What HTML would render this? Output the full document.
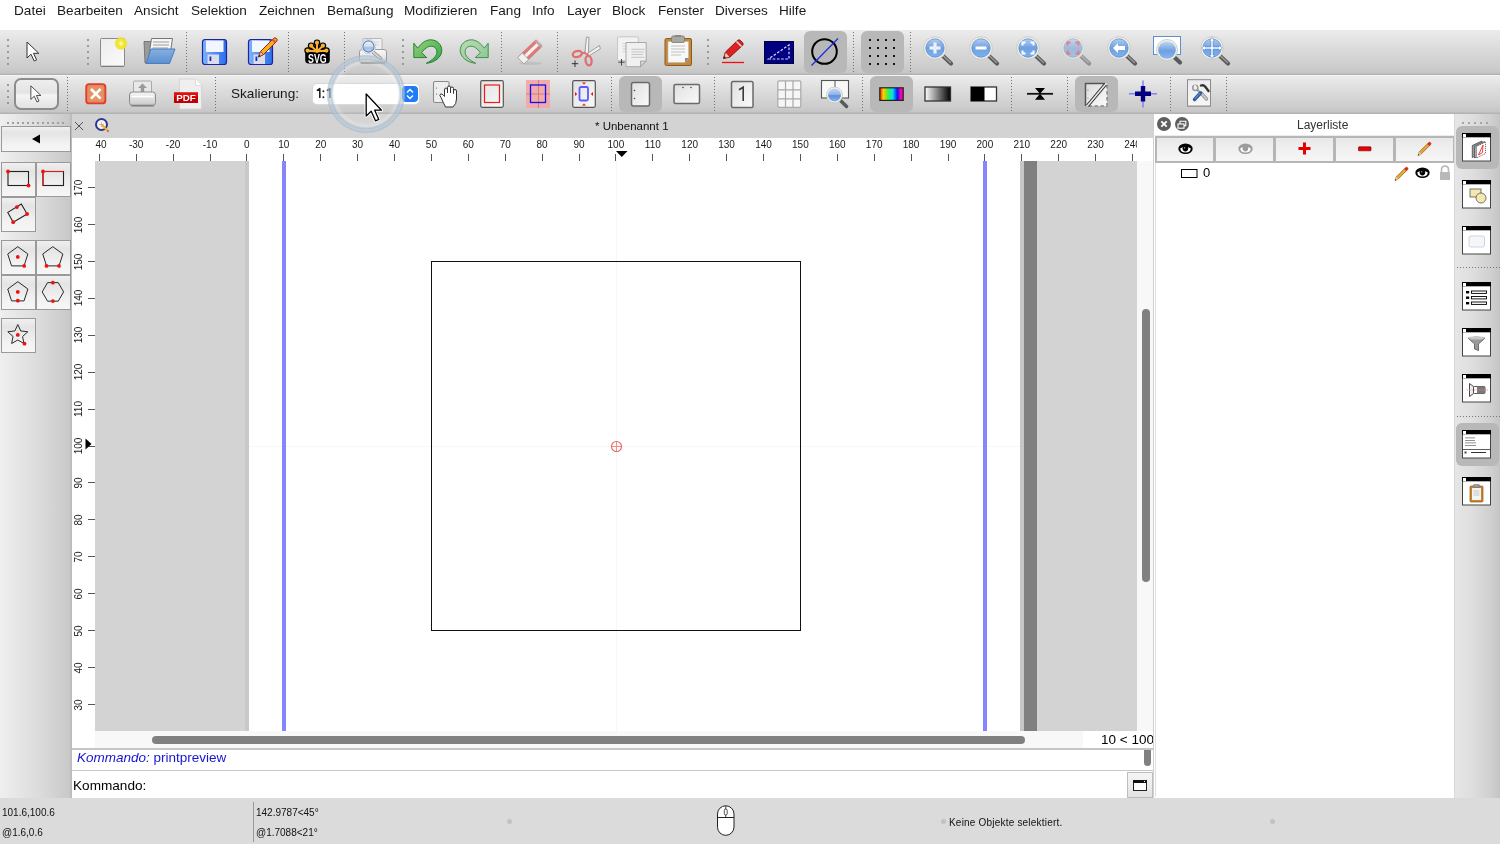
<!DOCTYPE html>
<html><head><meta charset="utf-8">
<style>
*{margin:0;padding:0;box-sizing:border-box}
html,body{width:1500px;height:844px;overflow:hidden;background:#fff;font-family:"Liberation Sans",sans-serif;color:#000;position:relative}
body{will-change:transform}
.a{position:absolute;overflow:visible}
.t{position:absolute;white-space:nowrap;line-height:1}
.menu{font-size:13.6px;color:#1a1a1a;top:3.5px}
.tb{background:linear-gradient(#ededed,#d9d9d9 60%,#cdcdcd);}
.rl{font-size:10px;color:#1a1a1a}
.st{font-size:10px;color:#111}
</style></head><body>
<div class="t menu" style="left:14px">Datei</div>
<div class="t menu" style="left:57px">Bearbeiten</div>
<div class="t menu" style="left:134px">Ansicht</div>
<div class="t menu" style="left:191px">Selektion</div>
<div class="t menu" style="left:259px">Zeichnen</div>
<div class="t menu" style="left:327px">Bemaßung</div>
<div class="t menu" style="left:404px">Modifizieren</div>
<div class="t menu" style="left:490px">Fang</div>
<div class="t menu" style="left:532px">Info</div>
<div class="t menu" style="left:567px">Layer</div>
<div class="t menu" style="left:612px">Block</div>
<div class="t menu" style="left:658px">Fenster</div>
<div class="t menu" style="left:715px">Diverses</div>
<div class="t menu" style="left:779px">Hilfe</div>
<div class="a" style="left:0px;top:30px;width:1500px;height:43px;background:linear-gradient(#ececec,#dcdcdc 40%,#cdcdcd 85%,#c6c6c6)"></div>
<div class="a" style="left:0px;top:73px;width:1500px;height:1px;background:#bdbdbd"></div>
<div class="a" style="left:0px;top:74px;width:1500px;height:1px;background:#b3b3b3"></div>
<div class="a" style="left:0px;top:75px;width:1500px;height:1px;background:#f4f4f4"></div>
<div class="a" style="left:0px;top:76px;width:1500px;height:36px;background:linear-gradient(#ececec,#dcdcdc 40%,#cdcdcd 85%,#c6c6c6)"></div>
<div class="a" style="left:0px;top:112px;width:1500px;height:1px;background:#bcbcbc"></div>
<div class="a" style="left:0px;top:113px;width:1500px;height:1px;background:#b3b3b3"></div>
<div class="a" style="left:7px;top:39px;width:2px;height:2px;background:#9a9a9a"></div>
<div class="a" style="left:7px;top:45px;width:2px;height:2px;background:#9a9a9a"></div>
<div class="a" style="left:7px;top:51px;width:2px;height:2px;background:#9a9a9a"></div>
<div class="a" style="left:7px;top:57px;width:2px;height:2px;background:#9a9a9a"></div>
<div class="a" style="left:7px;top:63px;width:2px;height:2px;background:#9a9a9a"></div>
<svg class="a" style="left:26px;top:41px;" width="15" height="22" viewBox="0 0 15 22"><path d="M1 1V17L5 13.2L8.2 20L10.6 18.9L7.5 12.3H12.8Z" fill="#fff" stroke="#333" stroke-width="1" stroke-linejoin="round"/></svg>
<div class="a" style="left:87px;top:39px;width:2px;height:2px;background:#9a9a9a"></div>
<div class="a" style="left:87px;top:45px;width:2px;height:2px;background:#9a9a9a"></div>
<div class="a" style="left:87px;top:51px;width:2px;height:2px;background:#9a9a9a"></div>
<div class="a" style="left:87px;top:57px;width:2px;height:2px;background:#9a9a9a"></div>
<div class="a" style="left:87px;top:63px;width:2px;height:2px;background:#9a9a9a"></div>
<svg class="a" style="left:99px;top:37px;" width="29" height="31" viewBox="0 0 29 31"><defs><radialGradient id="yg"><stop offset="0" stop-color="#fffff0"/><stop offset="0.35" stop-color="#f4ec30"/><stop offset="0.75" stop-color="#eee030" stop-opacity="0.9"/><stop offset="1" stop-color="#eee030" stop-opacity="0"/></radialGradient>
<linearGradient id="pg" x1="0" y1="0" x2="1" y2="1"><stop offset="0" stop-color="#ececec"/><stop offset="1" stop-color="#fbfbfb"/></linearGradient></defs>
<rect x="1.5" y="1.5" width="24" height="28" rx="1" fill="url(#pg)" stroke="#8a8a8a"/>
<rect x="2" y="28.5" width="23" height="1.5" fill="#777" opacity="0.6"/>
<circle cx="22" cy="6.5" r="7" fill="url(#yg)"/></svg>
<svg class="a" style="left:142px;top:37px;" width="35" height="29" viewBox="0 0 35 29"><defs><linearGradient id="fb" x1="0" y1="0" x2="0" y2="1"><stop offset="0" stop-color="#86b0e0"/><stop offset="1" stop-color="#5b8fd0"/></linearGradient></defs>
<path d="M2 4.5H9L8 26H3Z" fill="#9a9a9a" stroke="#666" stroke-width="0.8"/>
<path d="M9.5 1.5H30.5L28 18H7Z" fill="#f6f6f6" stroke="#777" stroke-width="1"/>
<path d="M11 5H27M11 8H27M10.5 11H26" stroke="#bbb" stroke-width="1.5"/>
<path d="M9 12H33L27.5 26.5H4Z" fill="url(#fb)" stroke="#4a7cc0" stroke-width="1"/></svg>
<div class="a" style="left:186px;top:32px;width:1px;height:40px;background:repeating-linear-gradient(#707070 0 1px,transparent 1px 3px)"></div>
<svg class="a" style="left:202px;top:39px;" width="26" height="27" viewBox="0 0 26 27"><defs><linearGradient id="flb" x1="0" y1="0" x2="1" y2="0"><stop offset="0" stop-color="#7fb2ff"/><stop offset="0.5" stop-color="#4d8ff5"/><stop offset="1" stop-color="#2f6fe8"/></linearGradient></defs>
<rect x="0.5" y="0.5" width="24" height="25" rx="2.5" fill="url(#flb)" stroke="#22229a" stroke-width="1.2"/>
<rect x="4" y="1.5" width="17.5" height="11.5" fill="#f4f6ff"/>
<rect x="5.5" y="15.5" width="11.5" height="9.5" fill="#dcdcea"/>
<rect x="7.5" y="17.5" width="1.8" height="4.5" fill="#0b32d0"/></svg>
<svg class="a" style="left:248px;top:39px;" width="26" height="27" viewBox="0 0 26 27"><defs><linearGradient id="flb2" x1="0" y1="0" x2="1" y2="0"><stop offset="0" stop-color="#7fb2ff"/><stop offset="0.5" stop-color="#4d8ff5"/><stop offset="1" stop-color="#2f6fe8"/></linearGradient></defs>
<rect x="0.5" y="0.5" width="24" height="25" rx="2.5" fill="url(#flb2)" stroke="#22229a" stroke-width="1.2"/>
<rect x="4" y="1.5" width="17.5" height="11.5" fill="#f4f6ff"/>
<rect x="5.5" y="15.5" width="11.5" height="9.5" fill="#dcdcea"/>
<rect x="7.5" y="17.5" width="1.8" height="4.5" fill="#0b32d0"/></svg>
<svg class="a" style="left:256px;top:36px;" width="22" height="24" viewBox="0 0 22 24"><path d="M2.5 21L4.5 15.5L17.5 2.5Q19 1 20.5 2.5Q22 4 20.5 5.5L7.5 18.5Z" fill="#f8b020" stroke="#a02010" stroke-width="1"/><path d="M5 16L8 19" stroke="#a02010" stroke-width="0.8"/><path d="M2.5 21L4.5 15.5L7.5 18.5Z" fill="#e8c8a0" stroke="#802010" stroke-width="0.6"/><path d="M2.5 21L3.3 18.8L4.7 20.2Z" fill="#222"/><path d="M16.5 3.5L19.5 6.5" stroke="#e05030" stroke-width="2"/></svg>
<div class="a" style="left:288px;top:32px;width:1px;height:40px;background:repeating-linear-gradient(#707070 0 1px,transparent 1px 3px)"></div>
<svg class="a" style="left:304px;top:39px;" width="27" height="26" viewBox="0 0 27 26"><rect x="1.2" y="9" width="24.6" height="15.6" rx="3.6" fill="#000"/><path d="M13 12.5L13 3.7" stroke="#000" stroke-width="4.6" stroke-linecap="round"/><circle cx="13" cy="3.7" r="3.3" fill="#000"/><path d="M13 12.5L7.1 6.7" stroke="#000" stroke-width="4.6" stroke-linecap="round"/><circle cx="7.1" cy="6.7" r="3.3" fill="#000"/><path d="M13 12.5L18.9 6.7" stroke="#000" stroke-width="4.6" stroke-linecap="round"/><circle cx="18.9" cy="6.7" r="3.3" fill="#000"/><path d="M13 12.5L3.6 11.6" stroke="#000" stroke-width="4.6" stroke-linecap="round"/><circle cx="3.6" cy="11.6" r="3.3" fill="#000"/><path d="M13 12.5L22.4 11.6" stroke="#000" stroke-width="4.6" stroke-linecap="round"/><circle cx="22.4" cy="11.6" r="3.3" fill="#000"/><path d="M13 12.5L13 3.7" stroke="#f8b030" stroke-width="2" stroke-linecap="round"/><circle cx="13" cy="3.7" r="2.1" fill="#f8b030"/><path d="M13 12.5L7.1 6.7" stroke="#f8b030" stroke-width="2" stroke-linecap="round"/><circle cx="7.1" cy="6.7" r="2.1" fill="#f8b030"/><path d="M13 12.5L18.9 6.7" stroke="#f8b030" stroke-width="2" stroke-linecap="round"/><circle cx="18.9" cy="6.7" r="2.1" fill="#f8b030"/><path d="M13 12.5L3.6 11.6" stroke="#f8b030" stroke-width="2" stroke-linecap="round"/><circle cx="3.6" cy="11.6" r="2.1" fill="#f8b030"/><path d="M13 12.5L22.4 11.6" stroke="#f8b030" stroke-width="2" stroke-linecap="round"/><circle cx="22.4" cy="11.6" r="2.1" fill="#f8b030"/>
<path d="M2.5 12.2H23.5" stroke="#f8b030" stroke-width="1.6"/><path d="M9 12L13 9.5L17 12Z" fill="#f8b030"/>
<text x="13.4" y="23.6" font-family="Liberation Sans" font-weight="bold" font-size="12.5" fill="#fff" text-anchor="middle" textLength="18.6" lengthAdjust="spacingAndGlyphs">SVG</text></svg>
<div class="a" style="left:344px;top:32px;width:1px;height:40px;background:repeating-linear-gradient(#707070 0 1px,transparent 1px 3px)"></div>
<svg class="a" style="left:358px;top:37px;" width="31" height="28" viewBox="0 0 31 28"><defs><linearGradient id="prb" x1="0" y1="0" x2="0" y2="1"><stop offset="0" stop-color="#fafafa"/><stop offset="0.6" stop-color="#e4e4e4"/><stop offset="1" stop-color="#c4c4c4"/></linearGradient>
<linearGradient id="lns" x1="0" y1="0" x2="0" y2="1"><stop offset="0" stop-color="#f4f7fc"/><stop offset="0.55" stop-color="#c8d6ea"/><stop offset="0.6" stop-color="#a8bcd8"/><stop offset="1" stop-color="#c4d4ea"/></linearGradient></defs>
<rect x="5" y="1.5" width="19" height="14" rx="1" fill="#f0f0f0" stroke="#b8b8b8"/>
<path d="M14 5H21M14 8H21" stroke="#d4d4d4"/>
<rect x="1.5" y="12.5" width="27" height="13.5" rx="2.5" fill="url(#prb)" stroke="#9a9a9a"/>
<rect x="2.5" y="24.5" width="25" height="2.5" rx="1" fill="#666" opacity="0.45"/>
<path d="M15.5 15.5L22.5 21.5" stroke="#8a8a8a" stroke-width="3.6" stroke-linecap="round"/><path d="M15.5 15.5L22.5 21.5" stroke="#d8d8d8" stroke-width="1.8" stroke-linecap="round"/>
<circle cx="10.5" cy="9.5" r="7.2" fill="#f6f6f6" stroke="#c8c8c8" stroke-width="0.8"/>
<circle cx="10.5" cy="9.5" r="5.6" fill="url(#lns)" stroke="#4f86d0" stroke-width="1.1"/></svg>
<div class="a" style="left:402px;top:39px;width:2px;height:2px;background:#9a9a9a"></div>
<div class="a" style="left:402px;top:45px;width:2px;height:2px;background:#9a9a9a"></div>
<div class="a" style="left:402px;top:51px;width:2px;height:2px;background:#9a9a9a"></div>
<div class="a" style="left:402px;top:57px;width:2px;height:2px;background:#9a9a9a"></div>
<div class="a" style="left:402px;top:63px;width:2px;height:2px;background:#9a9a9a"></div>
<svg class="a" style="left:413px;top:39px;" width="31" height="27" viewBox="0 0 31 27"><defs><linearGradient id="ug" x1="0" y1="0" x2="1" y2="1"><stop offset="0" stop-color="#96d27a"/><stop offset="1" stop-color="#34a448"/></linearGradient></defs><path d="M0.8 4.2L4.6 9.1C8 5 12 0.8 17.5 0.8C24 0.8 28.8 5.5 28.8 11.4C28.8 18 22 23.5 13.3 24.3C19.5 21 23.9 17.5 23.9 12.9C23.9 9.5 21.5 7.2 18.2 7.2C14.5 7.2 11.5 10 8.7 13.5L13.7 18.6H0.8Z" fill="url(#ug)" stroke="#1a7a2a" stroke-width="0.9" stroke-linejoin="round"/></svg>
<svg class="a" style="left:459px;top:39px;" width="31" height="27" viewBox="0 0 31 27"><defs><linearGradient id="rg" x1="1" y1="0" x2="0" y2="1"><stop offset="0" stop-color="#b4dca8"/><stop offset="1" stop-color="#7cc488"/></linearGradient></defs><g transform="translate(30,0) scale(-1,1)" opacity="0.85"><path d="M0.8 4.2L4.6 9.1C8 5 12 0.8 17.5 0.8C24 0.8 28.8 5.5 28.8 11.4C28.8 18 22 23.5 13.3 24.3C19.5 21 23.9 17.5 23.9 12.9C23.9 9.5 21.5 7.2 18.2 7.2C14.5 7.2 11.5 10 8.7 13.5L13.7 18.6H0.8Z" fill="url(#rg)" stroke="#1a7a2a" stroke-width="0.9" stroke-linejoin="round"/></g></svg>
<div class="a" style="left:501px;top:32px;width:1px;height:40px;background:repeating-linear-gradient(#707070 0 1px,transparent 1px 3px)"></div>
<svg class="a" style="left:516px;top:38px;" width="29" height="28" viewBox="0 0 29 28"><ellipse cx="14.5" cy="25.3" rx="11.5" ry="1.6" fill="#aaa" opacity="0.45"/>
<g transform="translate(14,13.8) rotate(-44)"><rect x="-12.8" y="-4.5" width="25.6" height="9" rx="1.2" fill="#e07a7a" stroke="#c46a6a" stroke-width="0.7"/>
<rect x="-12.8" y="-1.6" width="25.6" height="3.2" fill="#f6f2f2"/><rect x="10.6" y="-4.5" width="2.2" height="9" fill="#b8a8a8"/>
<rect x="-12.8" y="-4.5" width="6.5" height="9" fill="#f0f0f0" stroke="#9a9a9a" stroke-width="0.7"/></g></svg>
<div class="a" style="left:557px;top:32px;width:1px;height:40px;background:repeating-linear-gradient(#707070 0 1px,transparent 1px 3px)"></div>
<svg class="a" style="left:571px;top:36px;" width="31" height="31" viewBox="0 0 31 31"><path d="M13.8 18L15.5 1.2H18L17.2 18.5Z" fill="#f4f4f4" stroke="#8a8a8a" stroke-width="0.8"/>
<path d="M16.5 17.5L28.5 9.5L29.3 12.8L17.5 20Z" fill="#f4f4f4" stroke="#8a8a8a" stroke-width="0.8"/>
<path d="M10 17.5L15 16.5M16.5 20L16.2 17" stroke="#e07070" stroke-width="2.2"/>
<g fill="none" stroke="#e07070" stroke-width="2.3"><ellipse cx="6.3" cy="18" rx="4.6" ry="3" transform="rotate(-15 6.3 18)"/><ellipse cx="17.6" cy="24.6" rx="3" ry="4.8" transform="rotate(-8 17.6 24.6)"/></g>
<path d="M4 24.5V31M0.8 27.7H7.2" stroke="#333" stroke-width="1"/></svg>
<svg class="a" style="left:616px;top:36px;" width="32" height="32" viewBox="0 0 32 32"><rect x="1.5" y="0.8" width="20.8" height="23.7" rx="1" fill="#f2f2f2" stroke="#c4c4c4" stroke-width="0.9"/>
<path d="M6.5 7.5H12M6.5 10.3H12M6.5 13H12M6.5 15.8H12" stroke="#d0d0d0" stroke-width="1"/>
<path d="M10 6.5H30.2V25L24.5 30.7H10Z" fill="#f0f0f0" stroke="#a8a8a8" stroke-width="1"/>
<path d="M15.5 13.3H28.5M15.5 16H28M15.5 18.5H27M15.5 21.3H28.5" stroke="#c0c0c0" stroke-width="0.9"/>
<path d="M24.5 30.7V25H30.2Z" fill="#d4d4d4" stroke="#999" stroke-width="0.8"/>
<path d="M5.5 23V29.5M2.3 26.2H8.7" stroke="#333" stroke-width="0.9"/></svg>
<svg class="a" style="left:664px;top:35px;" width="29" height="32" viewBox="0 0 29 32"><rect x="1" y="3.5" width="26.5" height="27" rx="1.5" fill="#c48a3a" stroke="#8a5a20"/>
<path d="M4 6.5H24.5V23L21 27.5H4Z" fill="#f8f8f8" stroke="#bbb" stroke-width="0.6"/>
<path d="M7 11H21M7 14H21M7 17H21M7 20H17" stroke="#c0c0c0" stroke-width="1"/>
<path d="M21 27.5L24.5 23H21Z" fill="#888"/>
<rect x="7.5" y="1" width="13" height="6.5" rx="1.5" fill="#a8a8a0" stroke="#777" stroke-width="0.8"/>
<rect x="11" y="0" width="6" height="2" fill="#888"/></svg>
<div class="a" style="left:707px;top:39px;width:2px;height:2px;background:#9a9a9a"></div>
<div class="a" style="left:707px;top:45px;width:2px;height:2px;background:#9a9a9a"></div>
<div class="a" style="left:707px;top:51px;width:2px;height:2px;background:#9a9a9a"></div>
<div class="a" style="left:707px;top:57px;width:2px;height:2px;background:#9a9a9a"></div>
<div class="a" style="left:707px;top:63px;width:2px;height:2px;background:#9a9a9a"></div>
<svg class="a" style="left:721px;top:39px;" width="25" height="26" viewBox="0 0 25 26"><path d="M2.5 19.5L4.5 13L16.5 1.5Q18 0 19.5 1.5L21.5 3.5Q23 5 21.5 6.5L9 18Z" fill="#e02020" stroke="#801010" stroke-width="0.9"/>
<path d="M15.5 2.5L20.5 7.5" stroke="#ddd" stroke-width="1.6"/>
<path d="M2.5 19.5L4.5 13L9 18Z" fill="#f0c8a0" stroke="#801010" stroke-width="0.6"/>
<path d="M2.5 19.5L3.3 17L5 18.6Z" fill="#222"/>
<path d="M1 23.5H23" stroke="#f01010" stroke-width="1.3"/></svg>
<svg class="a" style="left:764px;top:41px;" width="31" height="23" viewBox="0 0 31 23"><rect x="0.5" y="0.5" width="29" height="22" fill="#000080" stroke="#000040"/>
<path d="M4.5 18H25V4Z" fill="none" stroke="#dcdcff" stroke-width="1.2" stroke-dasharray="2.6 1.6"/></svg>
<div class="a" style="left:804px;top:31px;width:43px;height:42px;background:#b8b8b8;border-radius:6px"></div>
<svg class="a" style="left:810px;top:37px;" width="30" height="30" viewBox="0 0 30 30"><circle cx="14.5" cy="14.5" r="12.3" fill="none" stroke="#000" stroke-width="2"/>
<path d="M1.5 28.5L28 1.5" stroke="#1a2ae0" stroke-width="1.2"/></svg>
<div class="a" style="left:853px;top:32px;width:1px;height:40px;background:repeating-linear-gradient(#707070 0 1px,transparent 1px 3px)"></div>
<div class="a" style="left:861px;top:31px;width:43px;height:42px;background:#b8b8b8;border-radius:6px"></div>
<svg class="a" style="left:869px;top:39px;" width="26" height="26" viewBox="0 0 26 26"><rect x="0" y="0" width="2" height="2" fill="#111"/><rect x="0" y="8" width="2" height="2" fill="#111"/><rect x="0" y="16" width="2" height="2" fill="#111"/><rect x="0" y="24" width="2" height="2" fill="#111"/><rect x="8" y="0" width="2" height="2" fill="#111"/><rect x="8" y="8" width="2" height="2" fill="#111"/><rect x="8" y="16" width="2" height="2" fill="#111"/><rect x="8" y="24" width="2" height="2" fill="#111"/><rect x="16" y="0" width="2" height="2" fill="#111"/><rect x="16" y="8" width="2" height="2" fill="#111"/><rect x="16" y="16" width="2" height="2" fill="#111"/><rect x="16" y="24" width="2" height="2" fill="#111"/><rect x="24" y="0" width="2" height="2" fill="#111"/><rect x="24" y="8" width="2" height="2" fill="#111"/><rect x="24" y="16" width="2" height="2" fill="#111"/><rect x="24" y="24" width="2" height="2" fill="#111"/></svg>
<div class="a" style="left:910px;top:32px;width:1px;height:40px;background:repeating-linear-gradient(#707070 0 1px,transparent 1px 3px)"></div>
<svg class="a" style="left:923px;top:36px;" width="32" height="32" viewBox="0 0 32 32"><defs><linearGradient id="zg923" x1="0" y1="0" x2="0" y2="1"><stop offset="0" stop-color="#b4cdf0"/><stop offset="0.5" stop-color="#6e9fe0"/><stop offset="1" stop-color="#7fb0ee"/></linearGradient></defs>
<g><path d="M19 19L28 27.5" stroke="#5a5a5a" stroke-width="4.2" stroke-linecap="round"/><path d="M19.5 19L27.5 26.5" stroke="#9a9a9a" stroke-width="1.5" stroke-linecap="round"/>
<circle cx="12" cy="12" r="11.3" fill="#f2f2ee" stroke="#c4c4b8" stroke-width="0.8"/>
<circle cx="12" cy="12" r="9.2" fill="url(#zg923)" stroke="#5d8fd0" stroke-width="0.8"/><path d="M12 6.5V17.5M6.5 12H17.5" stroke="#fff" stroke-width="3"/><path d="M12 6.5V17.5M6.5 12H17.5" stroke="#3a6ab8" stroke-width="0.4" opacity="0.4"/></g></svg>
<svg class="a" style="left:969px;top:36px;" width="32" height="32" viewBox="0 0 32 32"><defs><linearGradient id="zg969" x1="0" y1="0" x2="0" y2="1"><stop offset="0" stop-color="#b4cdf0"/><stop offset="0.5" stop-color="#6e9fe0"/><stop offset="1" stop-color="#7fb0ee"/></linearGradient></defs>
<g><path d="M19 19L28 27.5" stroke="#5a5a5a" stroke-width="4.2" stroke-linecap="round"/><path d="M19.5 19L27.5 26.5" stroke="#9a9a9a" stroke-width="1.5" stroke-linecap="round"/>
<circle cx="12" cy="12" r="11.3" fill="#f2f2ee" stroke="#c4c4b8" stroke-width="0.8"/>
<circle cx="12" cy="12" r="9.2" fill="url(#zg969)" stroke="#5d8fd0" stroke-width="0.8"/><path d="M6.5 12H17.5" stroke="#fff" stroke-width="3"/></g></svg>
<svg class="a" style="left:1016px;top:36px;" width="32" height="32" viewBox="0 0 32 32"><defs><linearGradient id="zg1016" x1="0" y1="0" x2="0" y2="1"><stop offset="0" stop-color="#b4cdf0"/><stop offset="0.5" stop-color="#6e9fe0"/><stop offset="1" stop-color="#7fb0ee"/></linearGradient></defs>
<g><path d="M19 19L28 27.5" stroke="#5a5a5a" stroke-width="4.2" stroke-linecap="round"/><path d="M19.5 19L27.5 26.5" stroke="#9a9a9a" stroke-width="1.5" stroke-linecap="round"/>
<circle cx="12" cy="12" r="11.3" fill="#f2f2ee" stroke="#c4c4b8" stroke-width="0.8"/>
<circle cx="12" cy="12" r="9.2" fill="url(#zg1016)" stroke="#5d8fd0" stroke-width="0.8"/><path d="M6.5 9.5V6.5H9.5M14.5 6.5H17.5V9.5M17.5 14.5V17.5H14.5M9.5 17.5H6.5V14.5" fill="none" stroke="#fff" stroke-width="2"/></g></svg>
<svg class="a" style="left:1061px;top:36px;" width="32" height="32" viewBox="0 0 32 32"><defs><linearGradient id="zg1061" x1="0" y1="0" x2="0" y2="1"><stop offset="0" stop-color="#b4cdf0"/><stop offset="0.5" stop-color="#6e9fe0"/><stop offset="1" stop-color="#7fb0ee"/></linearGradient></defs>
<g opacity="0.55"><path d="M19 19L28 27.5" stroke="#5a5a5a" stroke-width="4.2" stroke-linecap="round"/><path d="M19.5 19L27.5 26.5" stroke="#9a9a9a" stroke-width="1.5" stroke-linecap="round"/>
<circle cx="12" cy="12" r="11.3" fill="#f2f2ee" stroke="#c4c4b8" stroke-width="0.8"/>
<circle cx="12" cy="12" r="9.2" fill="url(#zg1061)" stroke="#5d8fd0" stroke-width="0.8"/><path d="M6.5 9.5V6.5H9.5M14.5 6.5H17.5V9.5M17.5 14.5V17.5H14.5M9.5 17.5H6.5V14.5" fill="none" stroke="#f03030" stroke-width="2"/></g></svg>
<svg class="a" style="left:1107px;top:36px;" width="32" height="32" viewBox="0 0 32 32"><defs><linearGradient id="zg1107" x1="0" y1="0" x2="0" y2="1"><stop offset="0" stop-color="#b4cdf0"/><stop offset="0.5" stop-color="#6e9fe0"/><stop offset="1" stop-color="#7fb0ee"/></linearGradient></defs>
<g><path d="M19 19L28 27.5" stroke="#5a5a5a" stroke-width="4.2" stroke-linecap="round"/><path d="M19.5 19L27.5 26.5" stroke="#9a9a9a" stroke-width="1.5" stroke-linecap="round"/>
<circle cx="12" cy="12" r="11.3" fill="#f2f2ee" stroke="#c4c4b8" stroke-width="0.8"/>
<circle cx="12" cy="12" r="9.2" fill="url(#zg1107)" stroke="#5d8fd0" stroke-width="0.8"/><path d="M6 12L11 7V10H18V14H11V17Z" fill="#fff"/></g></svg>
<svg class="a" style="left:1152px;top:35px;" width="32" height="32" viewBox="0 0 32 32"><defs><linearGradient id="zwg" x1="0" y1="0" x2="0" y2="1"><stop offset="0" stop-color="#c4d8f4"/><stop offset="0.55" stop-color="#6e9fe0"/><stop offset="1" stop-color="#8ab8f0"/></linearGradient></defs>
<rect x="1.5" y="1.5" width="27" height="18" fill="#fff" stroke="#5d8fd0" stroke-width="1"/>
<path d="M21 21L28 27.5" stroke="#5a5a5a" stroke-width="4.2" stroke-linecap="round"/>
<circle cx="15" cy="15" r="10.5" fill="#f2f2ee" stroke="#c4c4b8" stroke-width="0.8"/>
<circle cx="15" cy="15" r="8.8" fill="url(#zwg)"/></svg>
<svg class="a" style="left:1200px;top:36px;" width="32" height="32" viewBox="0 0 32 32"><defs><linearGradient id="zg1200" x1="0" y1="0" x2="0" y2="1"><stop offset="0" stop-color="#b4cdf0"/><stop offset="0.5" stop-color="#6e9fe0"/><stop offset="1" stop-color="#7fb0ee"/></linearGradient></defs>
<g><path d="M19 19L28 27.5" stroke="#5a5a5a" stroke-width="4.2" stroke-linecap="round"/><path d="M19.5 19L27.5 26.5" stroke="#9a9a9a" stroke-width="1.5" stroke-linecap="round"/>
<circle cx="12" cy="12" r="11.3" fill="#f2f2ee" stroke="#c4c4b8" stroke-width="0.8"/>
<circle cx="12" cy="12" r="9.2" fill="url(#zg1200)" stroke="#5d8fd0" stroke-width="0.8"/><path d="M12 1.5L14.5 5H13V11H19V9.5L22.5 12L19 14.5V13H13V19H14.5L12 22.5L9.5 19H11V13H5V14.5L1.5 12L5 9.5V11H11V5H9.5Z" fill="#fff" stroke="#4a7cc8" stroke-width="0.5"/></g></svg>
<div class="a" style="left:7px;top:84px;width:2px;height:2px;background:#9a9a9a"></div>
<div class="a" style="left:7px;top:90px;width:2px;height:2px;background:#9a9a9a"></div>
<div class="a" style="left:7px;top:96px;width:2px;height:2px;background:#9a9a9a"></div>
<div class="a" style="left:7px;top:102px;width:2px;height:2px;background:#9a9a9a"></div>
<div class="a" style="left:14px;top:78px;width:45px;height:32px;border:2px solid #8c8c8c;border-radius:7px;background:linear-gradient(#eeeeee,#e4e4e4 45%,#f4f4f4 55%,#e2e2e2)"></div>
<svg class="a" style="left:30px;top:85px;" width="15" height="22" viewBox="0 0 15 22"><g transform="scale(0.85)"><path d="M1 1V17L5 13.2L8.2 20L10.6 18.9L7.5 12.3H12.8Z" fill="#fff" stroke="#333" stroke-width="1" stroke-linejoin="round"/></g></svg>
<div class="a" style="left:67px;top:77px;width:1px;height:34px;background:repeating-linear-gradient(#707070 0 1px,transparent 1px 3px)"></div>
<svg class="a" style="left:85px;top:83px;" width="22" height="22" viewBox="0 0 22 22"><rect x="1.2" y="1.2" width="19.2" height="19.2" rx="3" fill="#e38a5c" stroke="#e23c2c" stroke-width="1.8"/><rect x="3.5" y="3.5" width="14.6" height="14.6" fill="#e49a70" opacity="0.5"/><path d="M6 6L15.6 15.6M15.6 6L6 15.6" stroke="#fff" stroke-width="2.6"/></svg>
<svg class="a" style="left:128px;top:80px;" width="29" height="28" viewBox="0 0 29 28"><defs><linearGradient id="pb2" x1="0" y1="0" x2="0" y2="1"><stop offset="0" stop-color="#f6f6f6"/><stop offset="1" stop-color="#c8c8c8"/></linearGradient></defs>
<rect x="5.5" y="1" width="18" height="13" rx="1" fill="#e8e8e8" stroke="#aaa"/>
<path d="M14.5 3.5L19 8H16.2V12.5H12.8V8H10Z" fill="#999"/>
<rect x="1.5" y="12" width="26" height="13.5" rx="3" fill="url(#pb2)" stroke="#8a8a8a"/>
<path d="M3.5 16.5H25.5" stroke="#fff" stroke-width="1.5"/>
<rect x="3" y="24.5" width="23" height="2.5" rx="1" fill="#777" opacity="0.5"/></svg>
<svg class="a" style="left:173px;top:78px;" width="30" height="32" viewBox="0 0 30 32"><path d="M6.5 1H22.5L28.5 7.5V31H6.5Z" fill="#efefef" stroke="#d0d0d0" stroke-width="0.8"/>
<path d="M22.5 1V7.5H28.5" fill="#fff" stroke="#ccc" stroke-width="0.6"/>
<rect x="1" y="14.5" width="24" height="10.5" fill="#c20000"/>
<rect x="1" y="14.5" width="24" height="4" fill="#e01010"/>
<text x="13" y="23.2" font-family="Liberation Sans" font-weight="bold" font-size="9.5" fill="#fff" text-anchor="middle" textLength="19.5" lengthAdjust="spacingAndGlyphs">PDF</text></svg>
<div class="a" style="left:215px;top:77px;width:1px;height:34px;background:repeating-linear-gradient(#707070 0 1px,transparent 1px 3px)"></div>
<div class="t" style="left:231px;top:87px;font-size:13.6px;color:#1a1a1a">Skalierung:</div>
<div class="a" style="left:312px;top:83px;width:108px;height:21.5px;background:#fff;border:1px solid #d4d8dc;border-radius:5px"></div>
<svg class="a" style="left:314px;top:86px;" width="20" height="14" viewBox="0 0 20 14"><path d="M2.8 4.6L5.8 2.6V12.1M12.9 4.6L15.9 2.6V12.1" fill="none" stroke="#1a1a1a" stroke-width="1.5" stroke-linejoin="round"/><circle cx="9.4" cy="5.3" r="0.95" fill="#1a1a1a"/><circle cx="9.4" cy="11.2" r="0.95" fill="#1a1a1a"/></svg>
<div class="a" style="left:402px;top:86px;width:16px;height:16px;background:#1f7cf6;border-radius:4px"></div>
<svg class="a" style="left:402px;top:86px;" width="16" height="16" viewBox="0 0 16 16"><path d="M5 6.5L8 3.5L11 6.5M5 9.5L8 12.5L11 9.5" fill="none" stroke="#fff" stroke-width="1.3"/></svg>
<svg class="a" style="left:432px;top:80px;" width="28" height="29" viewBox="0 0 28 29"><rect x="1.5" y="1.5" width="15.5" height="21" rx="1.5" fill="#eee" stroke="#8a8a8a" stroke-width="1.1"/>
<circle cx="4.5" cy="8" r="0.6" fill="#555"/><circle cx="4.5" cy="14" r="0.6" fill="#555"/>
<path d="M9 17.5Q7 15 8.5 14Q10 13.5 11.5 15.5L12.5 16.5V10Q12.5 8 14 8Q15.5 8 15.5 10V13V7.5Q15.5 6 17 6Q18.5 6 18.5 7.5V13V8.5Q18.5 7 20 7Q21.5 7 21.5 8.5V13.5V11Q21.5 9.5 23 9.5Q24.5 9.5 24.5 11V19Q24.5 24 21 27H13.5Q11.5 23 9 17.5Z" fill="#fff" stroke="#333" stroke-width="1"/></svg>
<svg class="a" style="left:480px;top:80px;" width="24" height="28" viewBox="0 0 24 28"><defs><linearGradient id="pbg480" x1="0" y1="0" x2="1" y2="1"><stop offset="0" stop-color="#e2e2e2"/><stop offset="1" stop-color="#f8f8f8"/></linearGradient></defs><rect x="0.7" y="0.7" width="22.6" height="26.6" rx="1.5" fill="url(#pbg480)" stroke="#555" stroke-width="1.2"/><rect x="4.5" y="5" width="15" height="17.5" fill="none" stroke="#f01818" stroke-width="1.2"/></svg>
<svg class="a" style="left:526px;top:80px;" width="24" height="28" viewBox="0 0 24 28"><rect x="0" y="0" width="24" height="28" fill="#f2aaaa"/><path d="M12.5 0V28M0 14H24" stroke="#c88080" stroke-width="1"/><rect x="4.5" y="5" width="15" height="17.5" fill="none" stroke="#1010f0" stroke-width="1.3"/></svg>
<svg class="a" style="left:572px;top:80px;" width="24" height="28" viewBox="0 0 24 28"><defs><linearGradient id="pbg572" x1="0" y1="0" x2="1" y2="1"><stop offset="0" stop-color="#e2e2e2"/><stop offset="1" stop-color="#f8f8f8"/></linearGradient></defs><rect x="0.7" y="0.7" width="22.6" height="26.6" rx="1.5" fill="url(#pbg572)" stroke="#555" stroke-width="1.2"/><rect x="7.5" y="7" width="8.5" height="13.5" rx="1.5" fill="none" stroke="#5a5aff" stroke-width="1.8"/><path d="M10 2.5H14L12 4.5ZM10 25.5H14L12 23.5ZM3 12L5.2 14L3 16ZM21 12L18.8 14L21 16Z" fill="#f01010"/></svg>
<div class="a" style="left:611px;top:77px;width:1px;height:34px;background:repeating-linear-gradient(#707070 0 1px,transparent 1px 3px)"></div>
<div class="a" style="left:619px;top:76px;width:43px;height:36px;background:#b8b8b8;border-radius:6px"></div>
<svg class="a" style="left:630px;top:81px;" width="21" height="27" viewBox="0 0 21 27"><defs><linearGradient id="ptg" x1="0" y1="0" x2="1" y2="1"><stop offset="0" stop-color="#e0e0e0"/><stop offset="1" stop-color="#fafafa"/></linearGradient></defs><rect x="1.5" y="1.5" width="18" height="23.5" rx="2" fill="url(#ptg)" stroke="#6a6a6a" stroke-width="1.5"/><circle cx="4.5" cy="9.5" r="0.8" fill="#444"/><circle cx="4.5" cy="17.5" r="0.8" fill="#444"/></svg>
<svg class="a" style="left:673px;top:83px;" width="28" height="22" viewBox="0 0 28 22"><defs><linearGradient id="ltg" x1="0" y1="0" x2="1" y2="1"><stop offset="0" stop-color="#e0e0e0"/><stop offset="1" stop-color="#fafafa"/></linearGradient></defs><rect x="1" y="1.5" width="25.5" height="19" rx="1.5" fill="url(#ltg)" stroke="#6a6a6a" stroke-width="1.5"/><circle cx="10" cy="4.5" r="0.8" fill="#444"/><circle cx="18" cy="4.5" r="0.8" fill="#444"/></svg>
<div class="a" style="left:714px;top:77px;width:1px;height:34px;background:repeating-linear-gradient(#707070 0 1px,transparent 1px 3px)"></div>
<svg class="a" style="left:730px;top:80px;" width="25" height="29" viewBox="0 0 25 29"><defs><linearGradient id="p1g" x1="0" y1="0" x2="1" y2="1"><stop offset="0" stop-color="#e0e0e0"/><stop offset="1" stop-color="#fafafa"/></linearGradient></defs><rect x="1.5" y="1.5" width="21.5" height="26" rx="1.5" fill="url(#p1g)" stroke="#6a6a6a" stroke-width="1.5"/><path d="M9 9.8L13.2 7.2V21" fill="none" stroke="#3a3a3a" stroke-width="1.6" stroke-linejoin="miter"/></svg>
<svg class="a" style="left:777px;top:80px;" width="25" height="29" viewBox="0 0 25 29"><rect x="0.8" y="0.8" width="23" height="26.5" rx="1.5" fill="#f6f6f6" stroke="#aaa" stroke-width="1.2"/><path d="M8.5 1V27.5M16 1V27.5M1 9.8H24M1 18.8H24" stroke="#a8a8a8" stroke-width="1.2"/></svg>
<svg class="a" style="left:820px;top:79px;" width="30" height="30" viewBox="0 0 30 30"><defs><linearGradient id="pzg" x1="0" y1="0" x2="0" y2="1"><stop offset="0" stop-color="#c4d8f4"/><stop offset="0.5" stop-color="#8ab0e8"/><stop offset="0.55" stop-color="#5a8ed8"/><stop offset="1" stop-color="#8ab8f0"/></linearGradient></defs>
<rect x="1.5" y="1.5" width="27" height="17.5" fill="#f8f8f8" stroke="#555" stroke-width="1.1"/><path d="M15 1.5V19" stroke="#555" stroke-width="1"/>
<path d="M19 20L26.5 27.5" stroke="#5a5a5a" stroke-width="3.5" stroke-linecap="round"/>
<circle cx="14.5" cy="16" r="8" fill="#f2f2ee" stroke="#c4c4b8" stroke-width="0.8"/>
<circle cx="14.5" cy="16" r="6.5" fill="url(#pzg)"/></svg>
<div class="a" style="left:862px;top:77px;width:1px;height:34px;background:repeating-linear-gradient(#707070 0 1px,transparent 1px 3px)"></div>
<div class="a" style="left:870px;top:76px;width:43px;height:36px;background:#b8b8b8;border-radius:6px"></div>
<svg class="a" style="left:879px;top:87px;" width="25" height="15" viewBox="0 0 25 15"><defs><linearGradient id="rbw" x1="0" y1="0" x2="1" y2="0"><stop offset="0" stop-color="#f02000"/><stop offset="0.15" stop-color="#ffd000"/><stop offset="0.35" stop-color="#40f040"/><stop offset="0.55" stop-color="#00e0f0"/><stop offset="0.75" stop-color="#1010f0"/><stop offset="0.9" stop-color="#ff00c0"/><stop offset="1" stop-color="#f00060"/></linearGradient></defs><rect x="0.8" y="0.8" width="23.4" height="12.6" fill="url(#rbw)" stroke="#222" stroke-width="1.2"/></svg>
<svg class="a" style="left:924px;top:86px;" width="28" height="16" viewBox="0 0 28 16"><defs><linearGradient id="gg" x1="0" y1="0" x2="1" y2="0"><stop offset="0" stop-color="#fff"/><stop offset="1" stop-color="#000"/></linearGradient></defs><rect x="1" y="1" width="25.5" height="14" fill="url(#gg)" stroke="#333" stroke-width="1.3"/></svg>
<svg class="a" style="left:970px;top:86px;" width="28" height="16" viewBox="0 0 28 16"><rect x="1" y="1" width="25.5" height="14" fill="#fff" stroke="#333" stroke-width="1.3"/><rect x="1" y="1" width="13.5" height="14" fill="#000"/></svg>
<div class="a" style="left:1011px;top:77px;width:1px;height:34px;background:repeating-linear-gradient(#707070 0 1px,transparent 1px 3px)"></div>
<svg class="a" style="left:1026px;top:87px;" width="28" height="14" viewBox="0 0 28 14"><path d="M1 6.8H27" stroke="#111" stroke-width="1.8"/><path d="M9 1H19L14 6.8ZM9 12.8H19L14 6.8Z" fill="#000"/></svg>
<div class="a" style="left:1067px;top:77px;width:1px;height:34px;background:repeating-linear-gradient(#707070 0 1px,transparent 1px 3px)"></div>
<div class="a" style="left:1075px;top:76px;width:43px;height:36px;background:#b8b8b8;border-radius:6px"></div>
<svg class="a" style="left:1084px;top:82px;" width="25" height="26" viewBox="0 0 25 26"><defs><linearGradient id="dpg" x1="0" y1="0" x2="1" y2="1"><stop offset="0" stop-color="#dcdcdc"/><stop offset="1" stop-color="#fafafa"/></linearGradient></defs><rect x="1.5" y="1.5" width="21.5" height="22.5" fill="url(#dpg)"/><path d="M1.5 24V1.5H21" fill="none" stroke="#555" stroke-width="1.5"/><path d="M23 3V24H3" fill="none" stroke="#888" stroke-width="1.5" stroke-dasharray="3.5 2.5"/><path d="M2.5 23L20.5 1.5M4.5 24.5L22.5 3" stroke="#333" stroke-width="1.1"/><circle cx="4" cy="8" r="0.6" fill="#666"/><circle cx="4" cy="16" r="0.6" fill="#666"/></svg>
<svg class="a" style="left:1128px;top:80px;" width="30" height="28" viewBox="0 0 30 28"><path d="M15 0.5V27.5M1 13.8H29" stroke="#8080ff" stroke-width="1.5"/><path d="M15 6V21.5M7 13.8H23" stroke="#000080" stroke-width="4.4"/></svg>
<div class="a" style="left:1170px;top:77px;width:1px;height:34px;background:repeating-linear-gradient(#707070 0 1px,transparent 1px 3px)"></div>
<svg class="a" style="left:1186px;top:79px;" width="26" height="29" viewBox="0 0 26 29"><defs><linearGradient id="tlg" x1="0" y1="0" x2="0" y2="1"><stop offset="0" stop-color="#ececec"/><stop offset="1" stop-color="#f6f6f6"/></linearGradient></defs>
<rect x="1.5" y="0.7" width="23" height="26.5" fill="url(#tlg)" stroke="#8a8a8a" stroke-width="1"/>
<rect x="1.5" y="26.5" width="23" height="1.5" fill="#999" opacity="0.6"/>
<path d="M15 14L20.5 20" stroke="#8a8a8a" stroke-width="3.4" stroke-linecap="round"/><path d="M15 14L20.5 20" stroke="#c8c8c8" stroke-width="2" stroke-linecap="round"/>
<path d="M11 10.5L15 14.5" stroke="#999" stroke-width="2.2"/>
<circle cx="9.3" cy="8.8" r="2.6" fill="none" stroke="#999" stroke-width="1.5"/><path d="M8.5 6L10 8.5" stroke="#f0f0f0" stroke-width="1.5"/>
<path d="M8.5 20.5L14.5 14" stroke="#2a5a9a" stroke-width="3.4" stroke-linecap="round"/><path d="M9 19.5L14 14.2" stroke="#5a8ad0" stroke-width="1.2" stroke-linecap="round"/>
<path d="M15 6.5Q17.5 5.5 19.5 8L22.5 12" stroke="#333" stroke-width="2.4" stroke-linecap="round" fill="none"/></svg>
<div class="a" style="left:1226px;top:77px;width:1px;height:34px;background:repeating-linear-gradient(#707070 0 1px,transparent 1px 3px)"></div>
<div class="a" style="left:0px;top:114px;width:70px;height:684px;background:linear-gradient(90deg,#efefef,#dadada 60%,#c8c8c8)"></div>
<div class="a" style="left:70px;top:114px;width:2px;height:684px;background:#bdbdbd"></div>
<div class="a" style="left:7px;top:122px;width:2px;height:2px;background:#a0a0a0"></div>
<div class="a" style="left:12px;top:122px;width:2px;height:2px;background:#a0a0a0"></div>
<div class="a" style="left:17px;top:122px;width:2px;height:2px;background:#a0a0a0"></div>
<div class="a" style="left:22px;top:122px;width:2px;height:2px;background:#a0a0a0"></div>
<div class="a" style="left:27px;top:122px;width:2px;height:2px;background:#a0a0a0"></div>
<div class="a" style="left:32px;top:122px;width:2px;height:2px;background:#a0a0a0"></div>
<div class="a" style="left:37px;top:122px;width:2px;height:2px;background:#a0a0a0"></div>
<div class="a" style="left:42px;top:122px;width:2px;height:2px;background:#a0a0a0"></div>
<div class="a" style="left:47px;top:122px;width:2px;height:2px;background:#a0a0a0"></div>
<div class="a" style="left:52px;top:122px;width:2px;height:2px;background:#a0a0a0"></div>
<div class="a" style="left:57px;top:122px;width:2px;height:2px;background:#a0a0a0"></div>
<div class="a" style="left:62px;top:122px;width:2px;height:2px;background:#a0a0a0"></div>
<div class="a" style="left:1px;top:126px;width:70px;height:26px;border:1px solid #9a9a9a;background:linear-gradient(#f0f0f0,#e4e4e4 25%,#f2f2f2 70%,#f6f6f6)"></div>
<svg class="a" style="left:31px;top:134px;" width="10" height="10" viewBox="0 0 10 10"><path d="M1 5L9 0.5V9.5Z" fill="#000"/></svg>
<div class="a" style="left:1px;top:162px;width:35px;height:35px;border:1px solid #9a9a9a;background:linear-gradient(#f0f0f0,#e4e4e4 25%,#f2f2f2 70%,#f6f6f6)"></div>
<svg class="a" style="left:1px;top:162px;" width="35" height="35" viewBox="0 0 35 35"><rect x="7" y="9.5" width="20.5" height="14" fill="none" stroke="#222" stroke-width="1.1"/><circle cx="7" cy="9.5" r="1.9" fill="#f01010"/><circle cx="27.5" cy="23.5" r="1.9" fill="#f01010"/></svg>
<div class="a" style="left:36px;top:162px;width:35px;height:35px;border:1px solid #9a9a9a;background:linear-gradient(#f0f0f0,#e4e4e4 25%,#f2f2f2 70%,#f6f6f6)"></div>
<svg class="a" style="left:36px;top:162px;" width="35" height="35" viewBox="0 0 35 35"><rect x="7" y="9.5" width="20.5" height="14" fill="none" stroke="#222" stroke-width="1.1"/><path d="M7 23.5V9.5H27.5" fill="none" stroke="#f01010" stroke-width="1.1"/><circle cx="7" cy="9.5" r="1.9" fill="#f01010"/></svg>
<div class="a" style="left:1px;top:197px;width:35px;height:35px;border:1px solid #9a9a9a;background:linear-gradient(#f0f0f0,#e4e4e4 25%,#f2f2f2 70%,#f6f6f6)"></div>
<svg class="a" style="left:1px;top:197px;" width="35" height="35" viewBox="0 0 35 35"><polygon points="6.8,15.4 20.3,7 26.1,17 12.2,25.2" fill="none" stroke="#222" stroke-width="1.1"/><circle cx="15.9" cy="10.1" r="1.9" fill="#f01010"/><circle cx="26.1" cy="17" r="1.9" fill="#f01010"/><circle cx="12.2" cy="25.2" r="1.9" fill="#f01010"/></svg>
<div class="a" style="left:1px;top:240px;width:35px;height:35px;border:1px solid #9a9a9a;background:linear-gradient(#f0f0f0,#e4e4e4 25%,#f2f2f2 70%,#f6f6f6)"></div>
<svg class="a" style="left:1px;top:240px;" width="35" height="35" viewBox="0 0 35 35"><polygon points="16.80,6.70 26.88,14.02 23.03,25.88 10.57,25.88 6.72,14.02" fill="none" stroke="#2a2a2a" stroke-width="1"/><circle cx="16.8" cy="16.9" r="1.9" fill="#f01010"/><circle cx="23.2" cy="25.9" r="1.9" fill="#f01010"/></svg>
<div class="a" style="left:36px;top:240px;width:35px;height:35px;border:1px solid #9a9a9a;background:linear-gradient(#f0f0f0,#e4e4e4 25%,#f2f2f2 70%,#f6f6f6)"></div>
<svg class="a" style="left:36px;top:240px;" width="35" height="35" viewBox="0 0 35 35"><polygon points="16.80,6.70 26.88,14.02 23.03,25.88 10.57,25.88 6.72,14.02" fill="none" stroke="#2a2a2a" stroke-width="1"/><circle cx="10.5" cy="25.9" r="1.9" fill="#f01010"/><circle cx="23" cy="25.9" r="1.9" fill="#f01010"/></svg>
<div class="a" style="left:1px;top:275px;width:35px;height:35px;border:1px solid #9a9a9a;background:linear-gradient(#f0f0f0,#e4e4e4 25%,#f2f2f2 70%,#f6f6f6)"></div>
<svg class="a" style="left:1px;top:275px;" width="35" height="35" viewBox="0 0 35 35"><polygon points="16.80,6.70 26.88,14.02 23.03,25.88 10.57,25.88 6.72,14.02" fill="none" stroke="#2a2a2a" stroke-width="1"/><circle cx="16.8" cy="16.9" r="1.9" fill="#f01010"/><circle cx="16.8" cy="25.7" r="1.9" fill="#f01010"/></svg>
<div class="a" style="left:36px;top:275px;width:35px;height:35px;border:1px solid #9a9a9a;background:linear-gradient(#f0f0f0,#e4e4e4 25%,#f2f2f2 70%,#f6f6f6)"></div>
<svg class="a" style="left:36px;top:275px;" width="35" height="35" viewBox="0 0 35 35"><polygon points="27.60,16.90 22.25,26.17 11.55,26.17 6.20,16.90 11.55,7.63 22.25,7.63" fill="none" stroke="#2a2a2a" stroke-width="1"/><circle cx="16.9" cy="7.7" r="1.9" fill="#f01010"/><circle cx="16.9" cy="26.1" r="1.9" fill="#f01010"/></svg>
<div class="a" style="left:1px;top:318px;width:35px;height:35px;border:1px solid #9a9a9a;background:linear-gradient(#f0f0f0,#e4e4e4 25%,#f2f2f2 70%,#f6f6f6)"></div>
<svg class="a" style="left:1px;top:318px;" width="35" height="35" viewBox="0 0 35 35"><polygon points="16.80,6.50 19.74,12.95 26.79,13.76 21.56,18.55 22.97,25.49 16.80,22.00 10.63,25.49 12.04,18.55 6.81,13.76 13.86,12.95" fill="none" stroke="#2a2a2a" stroke-width="1"/><circle cx="16.8" cy="16.9" r="1.9" fill="#f01010"/><circle cx="23.5" cy="25.7" r="1.9" fill="#f01010"/></svg>
<div class="a" style="left:72px;top:114px;width:1082px;height:24px;background:#d3d3d3"></div>
<div class="t" style="left:595px;top:121px;font-size:11.5px;color:#111">* Unbenannt 1</div>
<svg class="a" style="left:74px;top:121px;" width="10" height="10" viewBox="0 0 10 10"><path d="M1 1L9 9M9 1L1 9" stroke="#555" stroke-width="1"/></svg>
<svg class="a" style="left:95px;top:118px;" width="15" height="15" viewBox="0 0 15 15"><circle cx="6.5" cy="6.5" r="5.5" fill="#f4f4f4" stroke="#2a3a8a" stroke-width="2"/>
<path d="M4 6.5H9M6.5 4V9" stroke="#c88" stroke-width="0.6"/>
<path d="M7 7L12.5 12.5" stroke="#f0b020" stroke-width="2" stroke-linecap="round"/><circle cx="13" cy="13" r="1.2" fill="#e07070"/></svg>
<div class="a" style="left:72px;top:138px;width:1065px;height:23px;background:#fff"></div>
<div class="a" style="left:72px;top:161px;width:23px;height:587px;background:#fff"></div>
<div class="a" style="left:95px;top:161px;width:1042px;height:570px;background:#d3d3d3"></div>
<div class="a" style="left:245px;top:161px;width:4px;height:570px;background:#c8c8c8"></div>
<div class="a" style="left:249px;top:161px;width:771px;height:570px;background:#fff"></div>
<div class="a" style="left:1020px;top:161px;width:4px;height:570px;background:#c6c6c6"></div>
<div class="a" style="left:1024px;top:161px;width:13px;height:570px;background:#808080"></div>
<div class="a" style="left:616px;top:161px;width:1px;height:570px;background:#f7f7f7"></div>
<div class="a" style="left:249px;top:446px;width:771px;height:1px;background:#f7f7f7"></div>
<div class="a" style="left:282px;top:161px;width:4px;height:570px;background:#8585ff"></div>
<div class="a" style="left:983px;top:161px;width:4px;height:570px;background:#8585ff"></div>
<div class="a" style="left:431px;top:261px;width:370px;height:370px;border:1px solid #111"></div>
<svg class="a" style="left:609px;top:439px;" width="15" height="15" viewBox="0 0 15 15"><circle cx="7.5" cy="7.5" r="5" fill="none" stroke="#e86060" stroke-width="1.1"/><path d="M7.5 3V12M3 7.5H12" stroke="#ee9090" stroke-width="1"/></svg>
<div class="a" style="left:95px;top:138px;width:1042px;height:23px;overflow:hidden"><div class="a" style="left:4px;top:16px;width:1px;height:7px;background:#555"></div><div class="a" style="left:41px;top:16px;width:1px;height:7px;background:#555"></div><div class="a" style="left:78px;top:16px;width:1px;height:7px;background:#555"></div><div class="a" style="left:115px;top:16px;width:1px;height:7px;background:#555"></div><div class="a" style="left:151px;top:16px;width:1px;height:7px;background:#555"></div><div class="a" style="left:188px;top:16px;width:1px;height:7px;background:#555"></div><div class="a" style="left:225px;top:16px;width:1px;height:7px;background:#555"></div><div class="a" style="left:262px;top:16px;width:1px;height:7px;background:#555"></div><div class="a" style="left:299px;top:16px;width:1px;height:7px;background:#555"></div><div class="a" style="left:336px;top:16px;width:1px;height:7px;background:#555"></div><div class="a" style="left:373px;top:16px;width:1px;height:7px;background:#555"></div><div class="a" style="left:410px;top:16px;width:1px;height:7px;background:#555"></div><div class="a" style="left:447px;top:16px;width:1px;height:7px;background:#555"></div><div class="a" style="left:484px;top:16px;width:1px;height:7px;background:#555"></div><div class="a" style="left:520px;top:16px;width:1px;height:7px;background:#555"></div><div class="a" style="left:557px;top:16px;width:1px;height:7px;background:#555"></div><div class="a" style="left:594px;top:16px;width:1px;height:7px;background:#555"></div><div class="a" style="left:631px;top:16px;width:1px;height:7px;background:#555"></div><div class="a" style="left:668px;top:16px;width:1px;height:7px;background:#555"></div><div class="a" style="left:705px;top:16px;width:1px;height:7px;background:#555"></div><div class="a" style="left:742px;top:16px;width:1px;height:7px;background:#555"></div><div class="a" style="left:779px;top:16px;width:1px;height:7px;background:#555"></div><div class="a" style="left:816px;top:16px;width:1px;height:7px;background:#555"></div><div class="a" style="left:853px;top:16px;width:1px;height:7px;background:#555"></div><div class="a" style="left:889px;top:16px;width:1px;height:7px;background:#555"></div><div class="a" style="left:926px;top:16px;width:1px;height:7px;background:#555"></div><div class="a" style="left:963px;top:16px;width:1px;height:7px;background:#555"></div><div class="a" style="left:1000px;top:16px;width:1px;height:7px;background:#555"></div><div class="a" style="left:1037px;top:16px;width:1px;height:7px;background:#555"></div><div class="t rl" style="left:-25.7px;top:1.5px;width:60px;text-align:center">-40</div><div class="t rl" style="left:11.2px;top:1.5px;width:60px;text-align:center">-30</div><div class="t rl" style="left:48.1px;top:1.5px;width:60px;text-align:center">-20</div><div class="t rl" style="left:85.0px;top:1.5px;width:60px;text-align:center">-10</div><div class="t rl" style="left:121.9px;top:1.5px;width:60px;text-align:center">0</div><div class="t rl" style="left:158.8px;top:1.5px;width:60px;text-align:center">10</div><div class="t rl" style="left:195.7px;top:1.5px;width:60px;text-align:center">20</div><div class="t rl" style="left:232.6px;top:1.5px;width:60px;text-align:center">30</div><div class="t rl" style="left:269.5px;top:1.5px;width:60px;text-align:center">40</div><div class="t rl" style="left:306.4px;top:1.5px;width:60px;text-align:center">50</div><div class="t rl" style="left:343.3px;top:1.5px;width:60px;text-align:center">60</div><div class="t rl" style="left:380.2px;top:1.5px;width:60px;text-align:center">70</div><div class="t rl" style="left:417.1px;top:1.5px;width:60px;text-align:center">80</div><div class="t rl" style="left:454.0px;top:1.5px;width:60px;text-align:center">90</div><div class="t rl" style="left:490.9px;top:1.5px;width:60px;text-align:center">100</div><div class="t rl" style="left:527.8px;top:1.5px;width:60px;text-align:center">110</div><div class="t rl" style="left:564.7px;top:1.5px;width:60px;text-align:center">120</div><div class="t rl" style="left:601.6px;top:1.5px;width:60px;text-align:center">130</div><div class="t rl" style="left:638.5px;top:1.5px;width:60px;text-align:center">140</div><div class="t rl" style="left:675.4px;top:1.5px;width:60px;text-align:center">150</div><div class="t rl" style="left:712.3px;top:1.5px;width:60px;text-align:center">160</div><div class="t rl" style="left:749.2px;top:1.5px;width:60px;text-align:center">170</div><div class="t rl" style="left:786.1px;top:1.5px;width:60px;text-align:center">180</div><div class="t rl" style="left:823.0px;top:1.5px;width:60px;text-align:center">190</div><div class="t rl" style="left:859.9px;top:1.5px;width:60px;text-align:center">200</div><div class="t rl" style="left:896.8px;top:1.5px;width:60px;text-align:center">210</div><div class="t rl" style="left:933.7px;top:1.5px;width:60px;text-align:center">220</div><div class="t rl" style="left:970.6px;top:1.5px;width:60px;text-align:center">230</div><div class="t rl" style="left:1007.5px;top:1.5px;width:60px;text-align:center">240</div><svg class="a" style="left:521px;top:12.5px" width="12" height="7" viewBox="0 0 12 7"><path d="M0 0H11.5L5.75 6Z" fill="#000"/></svg></div>
<div class="a" style="left:72px;top:161px;width:23px;height:570px;overflow:hidden"><div class="a" style="left:16px;top:654px;width:7px;height:1px;background:#555"></div><div class="a" style="left:16px;top:617px;width:7px;height:1px;background:#555"></div><div class="a" style="left:16px;top:580px;width:7px;height:1px;background:#555"></div><div class="a" style="left:16px;top:543px;width:7px;height:1px;background:#555"></div><div class="a" style="left:16px;top:506px;width:7px;height:1px;background:#555"></div><div class="a" style="left:16px;top:469px;width:7px;height:1px;background:#555"></div><div class="a" style="left:16px;top:432px;width:7px;height:1px;background:#555"></div><div class="a" style="left:16px;top:395px;width:7px;height:1px;background:#555"></div><div class="a" style="left:16px;top:358px;width:7px;height:1px;background:#555"></div><div class="a" style="left:16px;top:321px;width:7px;height:1px;background:#555"></div><div class="a" style="left:16px;top:285px;width:7px;height:1px;background:#555"></div><div class="a" style="left:16px;top:248px;width:7px;height:1px;background:#555"></div><div class="a" style="left:16px;top:211px;width:7px;height:1px;background:#555"></div><div class="a" style="left:16px;top:174px;width:7px;height:1px;background:#555"></div><div class="a" style="left:16px;top:137px;width:7px;height:1px;background:#555"></div><div class="a" style="left:16px;top:100px;width:7px;height:1px;background:#555"></div><div class="a" style="left:16px;top:63px;width:7px;height:1px;background:#555"></div><div class="a" style="left:16px;top:26px;width:7px;height:1px;background:#555"></div><div class="a" style="left:16px;top:-11px;width:7px;height:1px;background:#555"></div><div class="a" style="left:16px;top:-48px;width:7px;height:1px;background:#555"></div><div class="t rl" style="left:-23px;top:649.3px;width:60px;height:10px;text-align:center;transform:rotate(-90deg)">0</div><div class="t rl" style="left:-23px;top:612.4px;width:60px;height:10px;text-align:center;transform:rotate(-90deg)">10</div><div class="t rl" style="left:-23px;top:575.4px;width:60px;height:10px;text-align:center;transform:rotate(-90deg)">20</div><div class="t rl" style="left:-23px;top:538.5px;width:60px;height:10px;text-align:center;transform:rotate(-90deg)">30</div><div class="t rl" style="left:-23px;top:501.6px;width:60px;height:10px;text-align:center;transform:rotate(-90deg)">40</div><div class="t rl" style="left:-23px;top:464.7px;width:60px;height:10px;text-align:center;transform:rotate(-90deg)">50</div><div class="t rl" style="left:-23px;top:427.8px;width:60px;height:10px;text-align:center;transform:rotate(-90deg)">60</div><div class="t rl" style="left:-23px;top:390.8px;width:60px;height:10px;text-align:center;transform:rotate(-90deg)">70</div><div class="t rl" style="left:-23px;top:353.9px;width:60px;height:10px;text-align:center;transform:rotate(-90deg)">80</div><div class="t rl" style="left:-23px;top:317.0px;width:60px;height:10px;text-align:center;transform:rotate(-90deg)">90</div><div class="t rl" style="left:-23px;top:280.1px;width:60px;height:10px;text-align:center;transform:rotate(-90deg)">100</div><div class="t rl" style="left:-23px;top:243.2px;width:60px;height:10px;text-align:center;transform:rotate(-90deg)">110</div><div class="t rl" style="left:-23px;top:206.2px;width:60px;height:10px;text-align:center;transform:rotate(-90deg)">120</div><div class="t rl" style="left:-23px;top:169.3px;width:60px;height:10px;text-align:center;transform:rotate(-90deg)">130</div><div class="t rl" style="left:-23px;top:132.4px;width:60px;height:10px;text-align:center;transform:rotate(-90deg)">140</div><div class="t rl" style="left:-23px;top:95.5px;width:60px;height:10px;text-align:center;transform:rotate(-90deg)">150</div><div class="t rl" style="left:-23px;top:58.6px;width:60px;height:10px;text-align:center;transform:rotate(-90deg)">160</div><div class="t rl" style="left:-23px;top:21.6px;width:60px;height:10px;text-align:center;transform:rotate(-90deg)">170</div><div class="t rl" style="left:-23px;top:-15.3px;width:60px;height:10px;text-align:center;transform:rotate(-90deg)">180</div><div class="t rl" style="left:-23px;top:-52.2px;width:60px;height:10px;text-align:center;transform:rotate(-90deg)">190</div><svg class="a" style="left:13px;top:277px" width="7" height="12" viewBox="0 0 7 12"><path d="M0.5 0.5V11.5L6.5 6Z" fill="#000"/></svg></div>
<div class="a" style="left:1137px;top:161px;width:17px;height:587px;background:#f8f8f8"></div>
<div class="a" style="left:95px;top:731px;width:988px;height:17px;background:#f8f8f8"></div>
<div class="a" style="left:1083px;top:731px;width:71px;height:17px;background:#fff"></div>
<div class="a" style="left:1142px;top:309px;width:8px;height:273px;background:#808080;border-radius:4px"></div>
<div class="a" style="left:152px;top:736px;width:873px;height:8px;background:#808080;border-radius:4px"></div>
<div class="t" style="left:1101px;top:732.5px;font-size:13.5px;color:#000">10 &lt; 100</div>
<div class="a" style="left:72px;top:748px;width:1082px;height:2px;background:#c6c6c6"></div>
<div class="a" style="left:72px;top:750px;width:1082px;height:20px;background:#fff"></div>
<div class="a" style="left:72px;top:770px;width:1082px;height:1px;background:#c8c8c8"></div>
<div class="a" style="left:72px;top:771px;width:1082px;height:27px;background:#fff"></div>
<div class="t" style="left:77px;top:751px;font-size:13.5px;color:#1515d2"><i>Kommando:</i> printpreview</div>
<div class="a" style="left:1144px;top:750px;width:7px;height:16px;background:#808080;border-radius:0 0 3.5px 3.5px"></div>
<div class="t" style="left:73px;top:779px;font-size:13.6px;color:#000">Kommando:</div>
<div class="a" style="left:1127px;top:772px;width:26px;height:26px;border:1px solid #bdbdbd;background:linear-gradient(#f6f6f6,#e2e2e2)"></div>
<svg class="a" style="left:1133px;top:780px;" width="14" height="11" viewBox="0 0 14 11"><rect x="0.5" y="0.5" width="13" height="10" fill="#fff" stroke="#222"/><rect x="0" y="0" width="14" height="3" fill="#111"/><rect x="11" y="1" width="1" height="1" fill="#fff"/></svg>
<div class="a" style="left:1154px;top:114px;width:301px;height:684px;background:#fff"></div>
<div class="a" style="left:1153px;top:114px;width:1px;height:684px;background:#d0d0d0"></div>
<svg class="a" style="left:1157px;top:117px;" width="32" height="15" viewBox="0 0 32 15"><circle cx="7" cy="7" r="7" fill="#5e5e5e"/><path d="M4.3 4.3L9.7 9.7M9.7 4.3L4.3 9.7" stroke="#fff" stroke-width="1.8"/><circle cx="25" cy="7" r="7" fill="#5e5e5e"/><rect x="21" y="7" width="6" height="4.2" fill="#5e5e5e" stroke="#fff" stroke-width="1.1"/><path d="M23 7V4.3H28.8V8.6H27" fill="none" stroke="#fff" stroke-width="1.1"/></svg>
<div class="t" style="left:1297px;top:119px;font-size:12px;color:#333">Layerliste</div>
<div class="a" style="left:1155px;top:135px;width:300px;height:2px;background:#ebebeb"></div>
<div class="a" style="left:1155px;top:136px;width:60px;height:27px;border:2px solid #b6b6b6;border-left-width:2px;background:linear-gradient(#e8e8e8,#f0f0f0 50%,#f6f6f6)"></div>
<div class="a" style="left:1215px;top:136px;width:60px;height:27px;border:2px solid #b6b6b6;border-left-width:0;background:linear-gradient(#e8e8e8,#f0f0f0 50%,#f6f6f6)"></div>
<div class="a" style="left:1275px;top:136px;width:60px;height:27px;border:2px solid #b6b6b6;border-left-width:0;background:linear-gradient(#e8e8e8,#f0f0f0 50%,#f6f6f6)"></div>
<div class="a" style="left:1335px;top:136px;width:60px;height:27px;border:2px solid #b6b6b6;border-left-width:0;background:linear-gradient(#e8e8e8,#f0f0f0 50%,#f6f6f6)"></div>
<div class="a" style="left:1395px;top:136px;width:60px;height:27px;border:2px solid #b6b6b6;border-left-width:0;background:linear-gradient(#e8e8e8,#f0f0f0 50%,#f6f6f6)"></div>
<div class="a" style="left:1214px;top:136px;width:2px;height:27px;background:#b6b6b6"></div>
<div class="a" style="left:1274px;top:136px;width:2px;height:27px;background:#b6b6b6"></div>
<div class="a" style="left:1334px;top:136px;width:2px;height:27px;background:#b6b6b6"></div>
<div class="a" style="left:1394px;top:136px;width:2px;height:27px;background:#b6b6b6"></div>
<svg class="a" style="left:1177.5px;top:142.5px;" width="15" height="12" viewBox="0 0 15 12"><ellipse cx="7.5" cy="5.8" rx="7.2" ry="5.2" fill="#000"/><path d="M2.3 5.2Q2.3 9.6 7.5 9.6Q12.7 9.6 12.7 5.2Q10 4 7.5 4Q5 4 2.3 5.2Z" fill="#fff"/><circle cx="7.4" cy="5.6" r="2.8" fill="#000"/><circle cx="6.6" cy="4.8" r="0.8" fill="#999"/></svg>
<svg class="a" style="left:1237.5px;top:142.5px;" width="15" height="12" viewBox="0 0 15 12"><ellipse cx="7.5" cy="5.8" rx="7.2" ry="5.2" fill="#9c9c9c"/><path d="M2.3 5.2Q2.3 9.6 7.5 9.6Q12.7 9.6 12.7 5.2Q10 4 7.5 4Q5 4 2.3 5.2Z" fill="#fff"/><circle cx="7.4" cy="5.6" r="2.8" fill="#9c9c9c"/><circle cx="6.6" cy="4.8" r="0.8" fill="#999"/></svg>
<svg class="a" style="left:1297px;top:141px;" width="15" height="15" viewBox="0 0 15 15"><path d="M7.5 1.5V13.5M1.5 7.5H13.5" stroke="#f00000" stroke-width="3"/><path d="M7.5 1.5V13.5M1.5 7.5H13.5" stroke="#900" stroke-width="3" opacity="0.15"/></svg>
<svg class="a" style="left:1358px;top:146px;" width="14" height="6" viewBox="0 0 14 6"><rect x="0.5" y="0.8" width="12.5" height="4" rx="0.6" fill="#f00000" stroke="#500" stroke-width="0.6"/></svg>
<svg class="a" style="left:1417px;top:141px;" width="16" height="16" viewBox="0 0 16 16"><path d="M1 14.5L2.2 11L11.5 1.7Q12.5 0.7 13.5 1.7Q14.5 2.7 13.5 3.7L4.2 13Z" fill="#e8a838" stroke="#8a5a10" stroke-width="0.7"/><path d="M11.5 1.7Q12.5 0.7 13.5 1.7Q14.5 2.7 13.5 3.7L12.3 4.9L10.3 2.9Z" fill="#e82020"/><path d="M1 14.5L2.2 11L4.2 13Z" fill="#f0d8a0"/><path d="M1 14.5L1.5 13L2.5 14Z" fill="#222"/></svg>
<div class="a" style="left:1155px;top:163px;width:1px;height:634px;background:#e0e0e0"></div>
<svg class="a" style="left:1181px;top:169px;" width="17" height="10" viewBox="0 0 17 10"><rect x="0.5" y="0.5" width="15.5" height="8" fill="#fff" stroke="#000" stroke-width="1"/></svg>
<div class="t" style="left:1203px;top:165.5px;font-size:13px;color:#000">0</div>
<svg class="a" style="left:1394px;top:166px;" width="16" height="16" viewBox="0 0 16 16"><path d="M1 14.5L2.2 11L11.5 1.7Q12.5 0.7 13.5 1.7Q14.5 2.7 13.5 3.7L4.2 13Z" fill="#e8a838" stroke="#8a5a10" stroke-width="0.7"/><path d="M11.5 1.7Q12.5 0.7 13.5 1.7Q14.5 2.7 13.5 3.7L12.3 4.9L10.3 2.9Z" fill="#e82020"/><path d="M1 14.5L2.2 11L4.2 13Z" fill="#f0d8a0"/><path d="M1 14.5L1.5 13L2.5 14Z" fill="#222"/></svg>
<svg class="a" style="left:1415px;top:167px;" width="15" height="12" viewBox="0 0 15 12"><ellipse cx="7.5" cy="5.8" rx="7.2" ry="5.2" fill="#000"/><path d="M2.3 5.2Q2.3 9.6 7.5 9.6Q12.7 9.6 12.7 5.2Q10 4 7.5 4Q5 4 2.3 5.2Z" fill="#fff"/><circle cx="7.4" cy="5.6" r="2.8" fill="#000"/><circle cx="6.6" cy="4.8" r="0.8" fill="#999"/></svg>
<svg class="a" style="left:1439px;top:165px;" width="12" height="16" viewBox="0 0 12 16"><path d="M2.5 7V4.8Q2.5 1 6 1Q9.5 1 9.5 4.8V7" fill="none" stroke="#b8b8b8" stroke-width="1.6"/><rect x="1" y="7" width="10" height="8" fill="#b8b8b8"/></svg>
<div class="a" style="left:1455px;top:114px;width:45px;height:684px;background:linear-gradient(90deg,#e6e6e6,#dedede 40%,#cdcdcd 85%,#c4c4c4)"></div>
<div class="a" style="left:1454px;top:114px;width:1px;height:684px;background:#dadada"></div>
<div class="a" style="left:1462px;top:122px;width:2px;height:2px;background:#a6a6a6"></div>
<div class="a" style="left:1468px;top:122px;width:2px;height:2px;background:#a6a6a6"></div>
<div class="a" style="left:1474px;top:122px;width:2px;height:2px;background:#a6a6a6"></div>
<div class="a" style="left:1480px;top:122px;width:2px;height:2px;background:#a6a6a6"></div>
<div class="a" style="left:1486px;top:122px;width:2px;height:2px;background:#a6a6a6"></div>
<div class="a" style="left:1456px;top:126px;width:43px;height:43px;background:#b8b8b8;border-radius:6px"></div>
<div class="a" style="left:1456px;top:423px;width:43px;height:43px;background:#b8b8b8;border-radius:6px"></div>
<div class="a" style="left:1457px;top:267px;width:43px;height:1px;background:repeating-linear-gradient(90deg,#777 0 1px,transparent 1px 3px)"></div>
<div class="a" style="left:1457px;top:416px;width:43px;height:1px;background:repeating-linear-gradient(90deg,#777 0 1px,transparent 1px 3px)"></div>
<svg class="a" style="left:1462px;top:133px;" width="30" height="29" viewBox="0 0 30 29"><rect x="0.5" y="0.5" width="28" height="27.5" fill="#fff" stroke="#444" stroke-width="1"/><rect x="0" y="0" width="29" height="4.3" fill="#000"/><rect x="1" y="1" width="3" height="3" fill="#fff"/><path d="M10.3 12.5L20 8V19.5L10.3 24.5Z" fill="#999" stroke="#555" stroke-width="0.9"/><path d="M12.5 13L22.5 8.5V20L12.5 25Z" fill="#aaa" stroke="#555" stroke-width="0.8"/><path d="M14.5 13.5L23.5 9V20.5L14.5 25Z" fill="#fff" stroke="#555" stroke-width="0.8" stroke-dasharray="1.2 0.8"/><path d="M16.5 22L21 12L20.5 19.5Z" fill="none" stroke="#f04040" stroke-width="1"/></svg>
<svg class="a" style="left:1462px;top:180px;" width="30" height="29" viewBox="0 0 30 29"><rect x="0.5" y="0.5" width="28" height="27.5" fill="#fff" stroke="#444" stroke-width="1"/><rect x="0" y="0" width="29" height="4.3" fill="#000"/><rect x="1" y="1" width="3" height="3" fill="#fff"/><rect x="8" y="9" width="11" height="8" fill="#f4e8b0" stroke="#555" stroke-width="0.8"/><circle cx="19" cy="18" r="5" fill="#f4e8b0" stroke="#555" stroke-width="0.8"/></svg>
<svg class="a" style="left:1462px;top:226px;" width="30" height="29" viewBox="0 0 30 29"><rect x="0.5" y="0.5" width="28" height="27.5" fill="#fff" stroke="#444" stroke-width="1"/><rect x="0" y="0" width="29" height="4.3" fill="#000"/><rect x="1" y="1" width="3" height="3" fill="#fff"/><rect x="7" y="10" width="15.5" height="11" rx="2" fill="#f6f6f6" stroke="#c8d4ec" stroke-width="1"/></svg>
<svg class="a" style="left:1462px;top:282px;" width="30" height="29" viewBox="0 0 30 29"><rect x="0.5" y="0.5" width="28" height="27.5" fill="#fff" stroke="#444" stroke-width="1"/><rect x="0" y="0" width="29" height="4.3" fill="#000"/><rect x="1" y="1" width="3" height="3" fill="#fff"/><g fill="#000"><rect x="4" y="9" width="3.2" height="2.4"/><rect x="4" y="14.5" width="3.2" height="2.4"/><rect x="4" y="20" width="3.2" height="2.4"/></g><g fill="none" stroke="#000" stroke-width="0.9"><rect x="9.5" y="9" width="15" height="2.4"/><rect x="9.5" y="14.5" width="15" height="2.4"/><rect x="9.5" y="20" width="15" height="2.4"/></g></svg>
<svg class="a" style="left:1462px;top:328px;" width="30" height="29" viewBox="0 0 30 29"><rect x="0.5" y="0.5" width="28" height="27.5" fill="#fff" stroke="#444" stroke-width="1"/><rect x="0" y="0" width="29" height="4.3" fill="#000"/><rect x="1" y="1" width="3" height="3" fill="#fff"/><path d="M6 10Q14 8 23 10L16.5 16V22.5L12.5 21V16Z" fill="#9a9a9a" stroke="#555" stroke-width="0.8"/><ellipse cx="14.5" cy="10" rx="8.5" ry="1.6" fill="#c8c8c8"/></svg>
<svg class="a" style="left:1462px;top:374px;" width="30" height="29" viewBox="0 0 30 29"><rect x="0.5" y="0.5" width="28" height="27.5" fill="#fff" stroke="#444" stroke-width="1"/><rect x="0" y="0" width="29" height="4.3" fill="#000"/><rect x="1" y="1" width="3" height="3" fill="#fff"/><path d="M7.5 9.5L11.5 12.5V19.5L7.5 22.5Z" fill="#eee" stroke="#333" stroke-width="0.9" stroke-linejoin="round"/><rect x="11.5" y="12.5" width="11.5" height="7" rx="1" fill="#fff" stroke="#444" stroke-width="0.9"/><rect x="15" y="12.5" width="8" height="7" rx="1" fill="#7a7a7a"/><path d="M4.5 16H26" stroke="#f08080" stroke-width="0.9" stroke-dasharray="1.5 1" opacity="0.8"/></svg>
<svg class="a" style="left:1462px;top:430px;" width="30" height="29" viewBox="0 0 30 29"><rect x="0.5" y="0.5" width="28" height="27.5" fill="#fff" stroke="#444" stroke-width="1"/><rect x="0" y="0" width="29" height="4.3" fill="#000"/><rect x="1" y="1" width="3" height="3" fill="#fff"/><g fill="#777"><rect x="3" y="7.5" width="10" height="0.8"/><rect x="3" y="10" width="10" height="0.8"/><rect x="3" y="12.5" width="11" height="0.8"/><rect x="3" y="15" width="11" height="0.8"/></g><path d="M0.5 19.5H28.5" stroke="#333" stroke-width="0.8"/><rect x="2.5" y="21.5" width="2" height="2" fill="#444"/><rect x="9" y="22" width="15" height="1" fill="#333"/></svg>
<svg class="a" style="left:1462px;top:477px;" width="30" height="29" viewBox="0 0 30 29"><rect x="0.5" y="0.5" width="28" height="27.5" fill="#fff" stroke="#444" stroke-width="1"/><rect x="0" y="0" width="29" height="4.3" fill="#000"/><rect x="1" y="1" width="3" height="3" fill="#fff"/><rect x="8" y="9" width="13" height="16" rx="1" fill="#c8862a" stroke="#8a5a20" stroke-width="0.7"/><rect x="10" y="11" width="9" height="12" fill="#f4f4f4"/><path d="M11.5 14H17.5M11.5 16H17.5M11.5 18H17.5" stroke="#bbb" stroke-width="0.8"/><rect x="11.5" y="7.5" width="6" height="3" rx="0.8" fill="#999" stroke="#666" stroke-width="0.5"/></svg>
<div class="a" style="left:0px;top:798px;width:1500px;height:46px;background:#dbdbdb"></div>
<div class="t" style="left:2px;top:808px;font-size:10px;color:#111">101.6,100.6</div>
<div class="t" style="left:2px;top:828px;font-size:10px;color:#111">@1.6,0.6</div>
<div class="a" style="left:253px;top:802px;width:1px;height:40px;background:#9a9a9a"></div>
<div class="t" style="left:256px;top:808px;font-size:10px;color:#111">142.9787&lt;45°</div>
<div class="t" style="left:256px;top:828px;font-size:10px;color:#111">@1.7088&lt;21°</div>
<svg class="a" style="left:716px;top:805px;" width="20" height="32" viewBox="0 0 20 32"><rect x="1.5" y="0.8" width="16.5" height="29.5" rx="8.2" fill="#fff" stroke="#222" stroke-width="1"/><path d="M1.5 12.5H18" stroke="#222" stroke-width="1"/><path d="M9.75 0.8V12.5" stroke="#222" stroke-width="0.8"/><rect x="8.3" y="4" width="2.9" height="6" rx="1.4" fill="#fff" stroke="#222" stroke-width="0.8"/></svg>
<div class="a" style="left:506.5px;top:819px;width:5px;height:5px;background:#c2c2c2;border-radius:50%"></div>
<div class="a" style="left:940.5px;top:819px;width:5px;height:5px;background:#c2c2c2;border-radius:50%"></div>
<div class="a" style="left:1269.5px;top:819px;width:5px;height:5px;background:#c2c2c2;border-radius:50%"></div>
<div class="t" style="left:949px;top:817.5px;font-size:10px;color:#111;letter-spacing:0.2px">Keine Objekte selektiert.</div>
<svg class="a" style="left:326px;top:54px;" width="80" height="80" viewBox="0 0 80 80"><defs><radialGradient id="ring" cx="40" cy="40" r="40" gradientUnits="userSpaceOnUse">
<stop offset="0" stop-color="#fff" stop-opacity="0"/>
<stop offset="0.72" stop-color="#fff" stop-opacity="0.05"/>
<stop offset="0.80" stop-color="#fff" stop-opacity="0.28"/>
<stop offset="0.83" stop-color="#c8d4e0" stop-opacity="0.5"/>
<stop offset="0.87" stop-color="#a8bccf" stop-opacity="0.75"/>
<stop offset="0.91" stop-color="#bccbd9" stop-opacity="0.6"/>
<stop offset="0.95" stop-color="#a8bccf" stop-opacity="0.75"/>
<stop offset="1" stop-color="#a8bccf" stop-opacity="0"/>
</radialGradient></defs><circle cx="40" cy="40" r="39.5" fill="url(#ring)"/></svg>
<svg class="a" style="left:362px;top:90px;" width="24" height="34" viewBox="0 0 24 34"><g transform="translate(4.2,4)"><path d="M0 0V22L5 17.3L9.3 26.8L12.6 25.4L8.5 16.2H15.3Z" fill="#fff" stroke="#fff" stroke-width="3.2" stroke-linejoin="round"/><path d="M0 0V22L5 17.3L9.3 26.8L12.6 25.4L8.5 16.2H15.3Z" fill="#fff" stroke="#000" stroke-width="1.3" stroke-linejoin="round"/></g></svg>
</body></html>
